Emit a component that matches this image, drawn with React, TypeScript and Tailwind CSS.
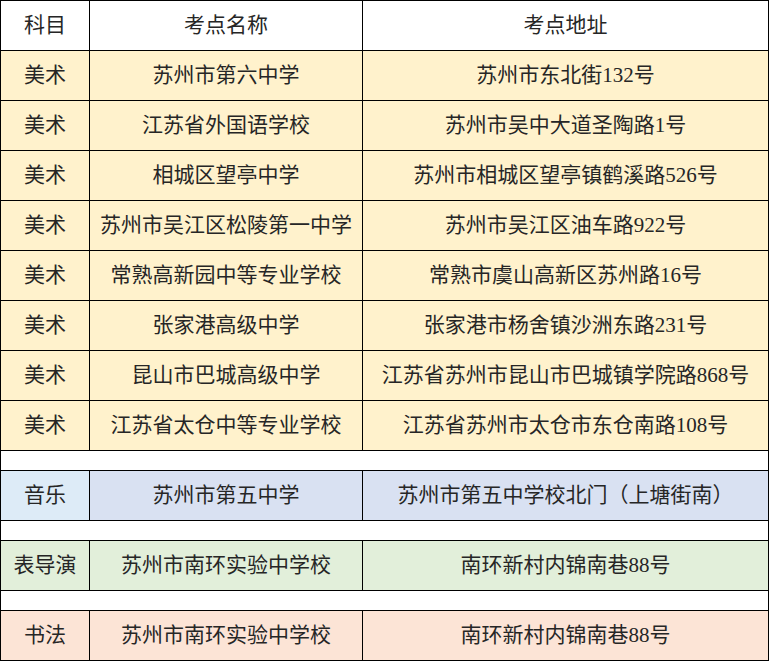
const rows: { subject: string; name: string; address: string; bg: string; subBg: string }[] = [
  { subject: '美术', name: '苏州市第六中学', address: '苏州市东北街132号', bg: 'bg-[#fff2cc]', subBg: 'bg-[#fff2cc]' },
  { subject: '美术', name: '江苏省外国语学校', address: '苏州市吴中大道圣陶路1号', bg: 'bg-[#fff2cc]', subBg: 'bg-[#fff2cc]' },
  { subject: '美术', name: '相城区望亭中学', address: '苏州市相城区望亭镇鹤溪路526号', bg: 'bg-[#fff2cc]', subBg: 'bg-[#fff2cc]' },
  { subject: '美术', name: '苏州市吴江区松陵第一中学', address: '苏州市吴江区油车路922号', bg: 'bg-[#fff2cc]', subBg: 'bg-[#fff2cc]' },
  { subject: '美术', name: '常熟高新园中等专业学校', address: '常熟市虞山高新区苏州路16号', bg: 'bg-[#fff2cc]', subBg: 'bg-[#fff2cc]' },
  { subject: '美术', name: '张家港高级中学', address: '张家港市杨舍镇沙洲东路231号', bg: 'bg-[#fff2cc]', subBg: 'bg-[#fff2cc]' },
  { subject: '美术', name: '昆山市巴城高级中学', address: '江苏省苏州市昆山市巴城镇学院路868号', bg: 'bg-[#fff2cc]', subBg: 'bg-[#fff2cc]' },
  { subject: '美术', name: '江苏省太仓中等专业学校', address: '江苏省苏州市太仓市东仓南路108号', bg: 'bg-[#fff2cc]', subBg: 'bg-[#fff2cc]' },
];

const extra = [
  { subject: '音乐', name: '苏州市第五中学', address: '苏州市第五中学校北门（上塘街南）', bg: 'bg-[#d9e1f2]', subBg: 'bg-[#ddebf7]' },
  { subject: '表导演', name: '苏州市南环实验中学校', address: '南环新村内锦南巷88号', bg: 'bg-[#e2efda]', subBg: 'bg-[#e2efda]' },
  { subject: '书法', name: '苏州市南环实验中学校', address: '南环新村内锦南巷88号', bg: 'bg-[#fce4d6]', subBg: 'bg-[#fce4d6]' },
];

const cell = 'flex items-center justify-center border-r border-black whitespace-nowrap';

function Row({ subject, name, address, bg, subBg }: (typeof rows)[number]) {
  return (
    <div className="grid h-[50px] grid-cols-[89px_273px_1fr] border-b border-l border-black">
      <div className={`${cell} ${subBg}`}>{subject}</div>
      <div className={`${cell} ${bg}`}>{name}</div>
      <div className={`${cell} ${bg}`}>{address}</div>
    </div>
  );
}

function Gap() {
  return <div className="h-[20px] border-b border-x border-black bg-white" />;
}

export default function App() {
  return (
    <div
      className="w-[769px] bg-white text-[21px] leading-none text-[#262626]"
      style={{ fontFamily: '"Liberation Serif", "Noto Sans CJK SC", serif' }}
    >
      <div className="grid h-[51px] grid-cols-[89px_273px_1fr] border-y border-l border-black bg-white">
        <div className={cell}>科目</div>
        <div className={cell}>考点名称</div>
        <div className={cell}>考点地址</div>
      </div>
      {rows.map((r, i) => (
        <Row key={i} {...r} />
      ))}
      {extra.map((r, i) => (
        <div key={i}>
          <Gap />
          <Row {...r} />
        </div>
      ))}
    </div>
  );
}
